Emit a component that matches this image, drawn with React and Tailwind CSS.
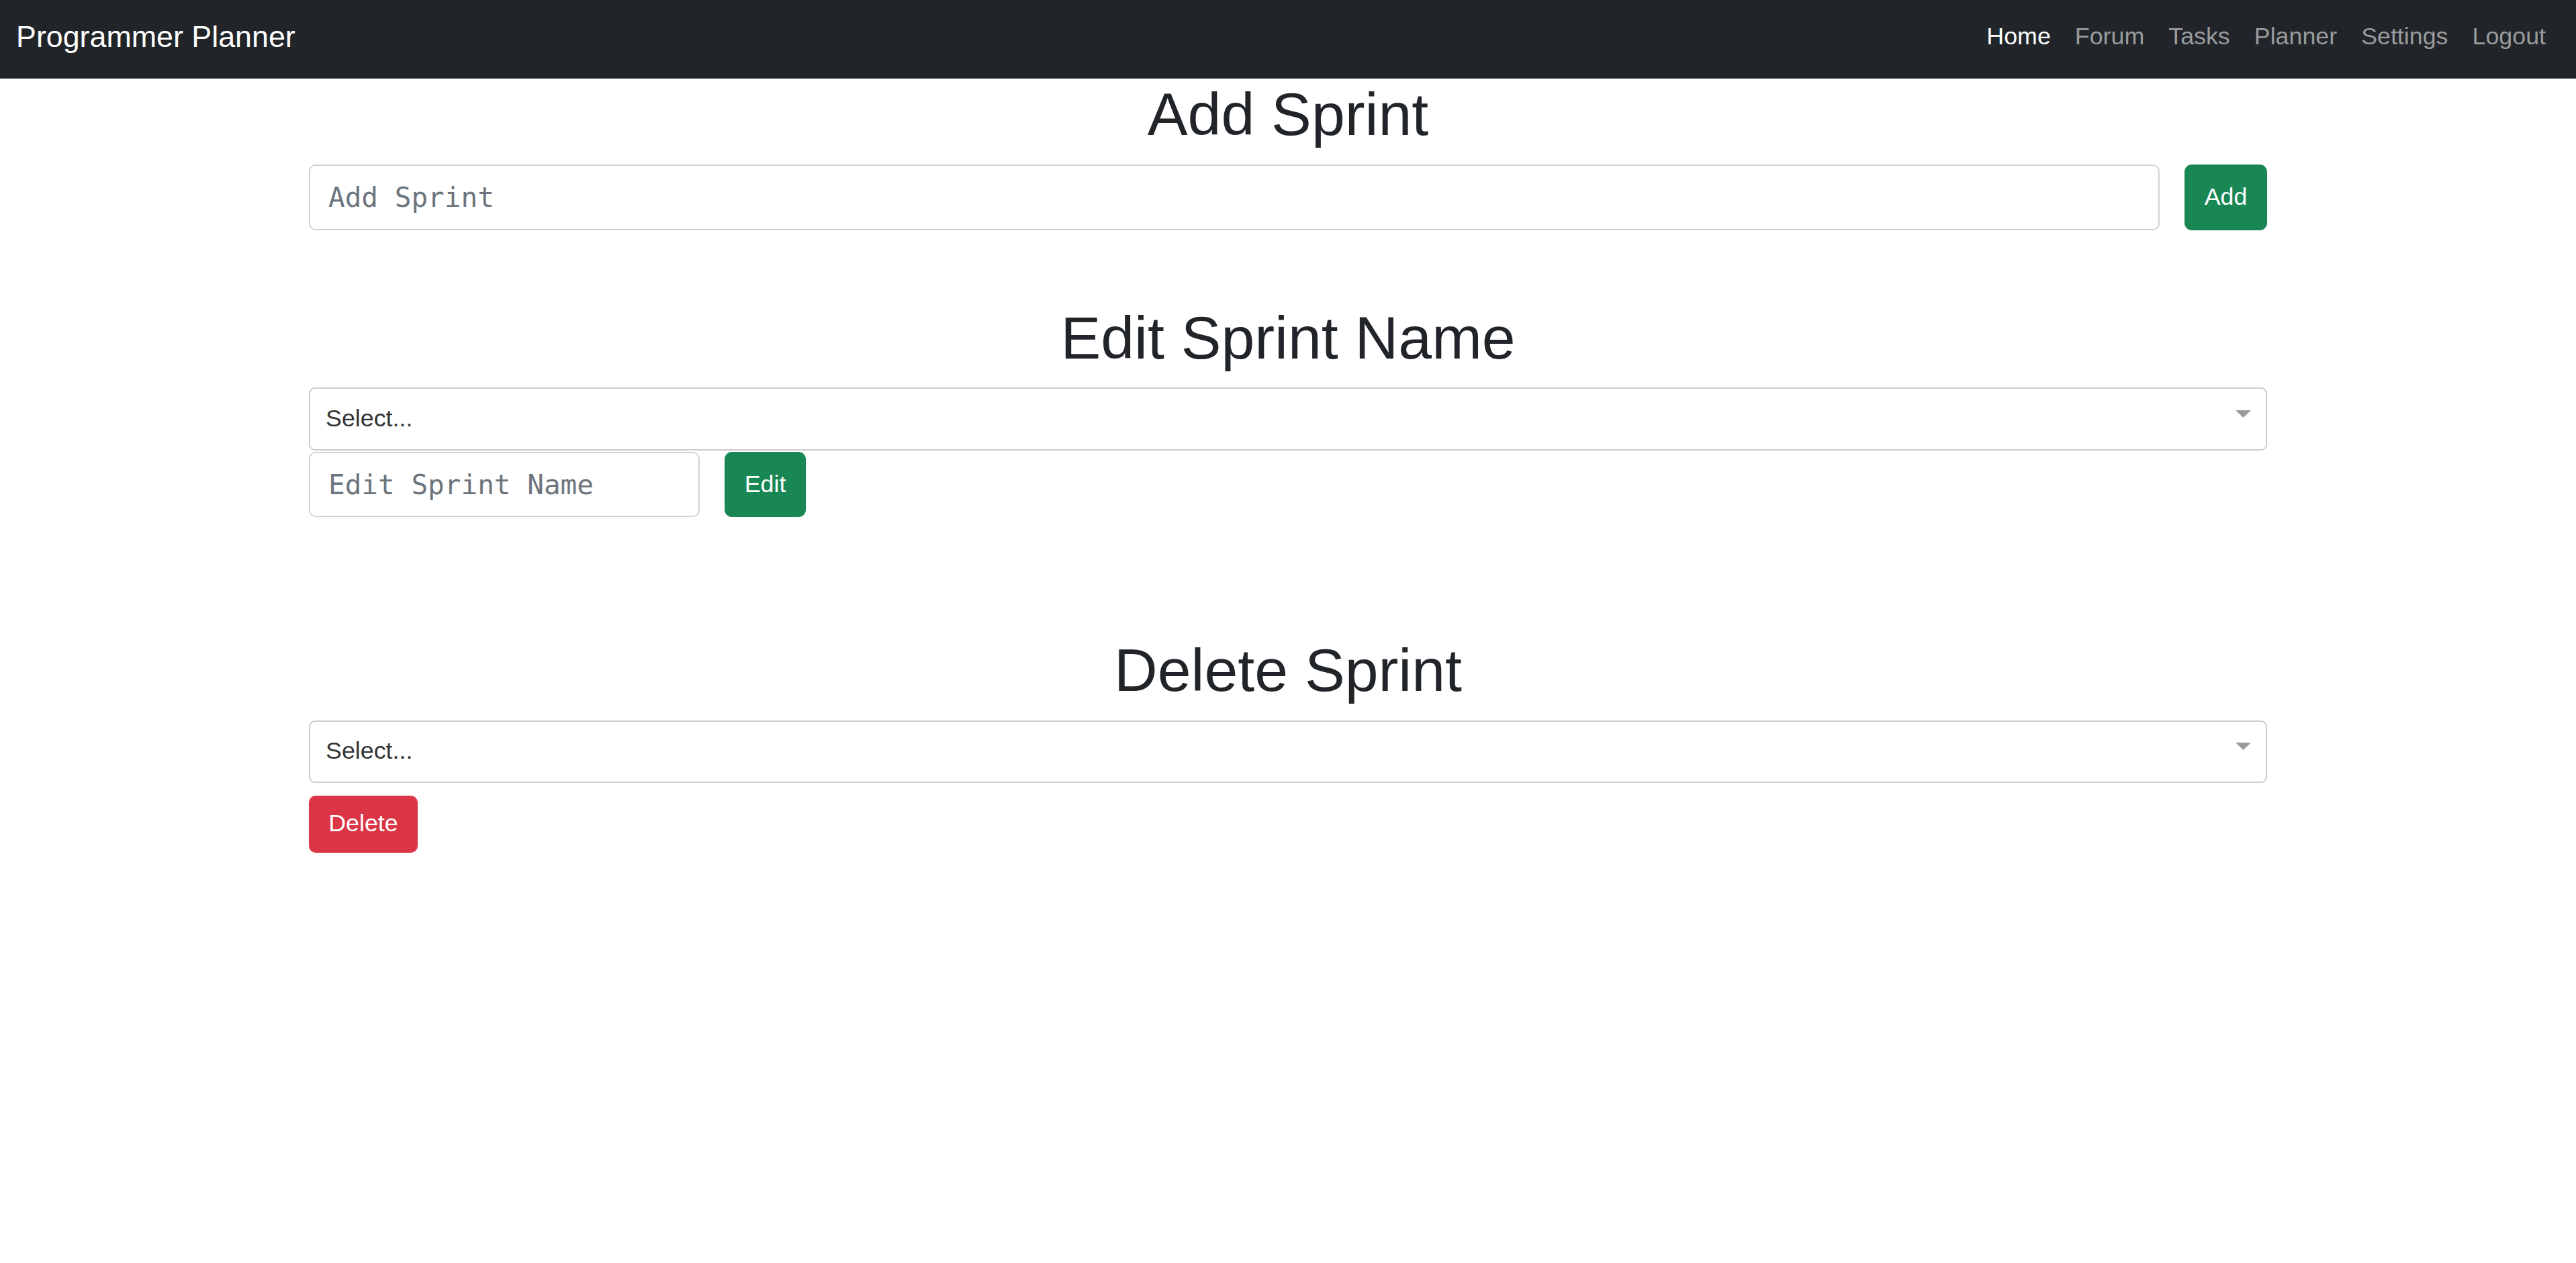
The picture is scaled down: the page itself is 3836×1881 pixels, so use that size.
import React from "react";

function SelectBox({ className = "" }) {
  return (
    <div
      className={`flex items-center justify-between border-2 border-[#cccccc] rounded-[9px] bg-white pl-[23px] pr-[22px] ${className}`}
    >
      <span className="text-[35.8px] text-[#333333] leading-none">Select...</span>
      <svg width="23" height="11" viewBox="0 0 23 11" className="mb-[15px]">
        <polygon points="0,0 23,0 11.5,11" fill="#999999" />
      </svg>
    </div>
  );
}

function TextInput({ placeholder, className = "" }) {
  return (
    <input
      type="text"
      placeholder={placeholder}
      className={`border-2 border-[#ced4da] rounded-[10px] bg-white pl-[27px] text-[41px] font-['DejaVu_Sans_Mono',monospace] text-[#212529] placeholder:text-[#6c757d] outline-none ${className}`}
    />
  );
}

export default function App() {
  const links = ["Home", "Forum", "Tasks", "Planner", "Settings", "Logout"];
  return (
    <div className="min-h-screen bg-white font-['Liberation_Sans',Arial,sans-serif] text-[#212529]">
      <nav className="h-[117px] bg-[#212529] flex items-start justify-between pl-[24px] pr-[27px]">
        <span className="mt-[32px] text-[44.8px] leading-none text-white">Programmer Planner</span>
        <ul className="mt-[37px] flex">
          {links.map((l, i) => (
            <li
              key={l}
              className={`px-[18px] text-[35.8px] leading-none ${i === 0 ? "text-white" : "text-[#9a9b9d]"}`}
            >
              {l}
            </li>
          ))}
        </ul>
      </nav>

      <main className="w-[2916px] mx-auto">
        <h1 className="text-center text-[89.6px] leading-[107.5px] mb-[20px]">Add Sprint</h1>
        <div className="flex gap-[37px]">
          <TextInput placeholder="Add Sprint" className="flex-1 h-[98px]" />
          <button className="w-[123px] h-[98px] rounded-[11px] bg-[#198754] text-white text-[35.8px] leading-none">
            Add
          </button>
        </div>

        <h1 className="mt-[107px] text-center text-[89.6px] leading-[107.5px] mb-[20px]">Edit Sprint Name</h1>
        <SelectBox className="h-[94px]" />
        <div className="mt-[2px] flex gap-[37px]">
          <TextInput placeholder="Edit Sprint Name" className="w-[582px] h-[97px]" />
          <button className="w-[121px] h-[97px] rounded-[11px] bg-[#198754] text-white text-[35.8px] leading-none">
            Edit
          </button>
        </div>

        <h1 className="mt-[175px] text-center text-[89.6px] leading-[107.5px] mb-[20px]">Delete Sprint</h1>
        <SelectBox className="h-[93px]" />
        <button className="mt-[19px] w-[162px] h-[85px] rounded-[10px] bg-[#dc3545] text-white text-[35.8px] leading-none">
          Delete
        </button>
      </main>
    </div>
  );
}
